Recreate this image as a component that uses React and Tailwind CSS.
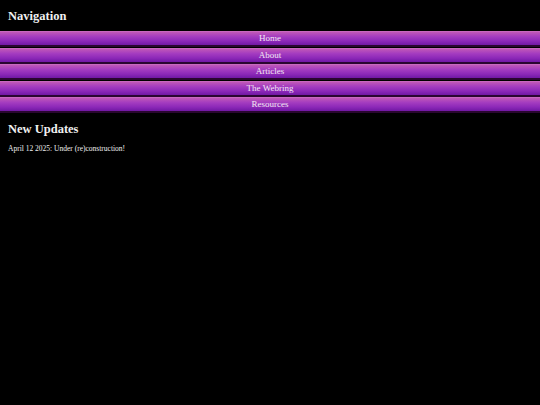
const links = ['Home', 'About', 'Articles', 'The Webring', 'Resources'];

export default function App() {
  return (
    <div className="min-h-[405px] bg-black text-[#f0f0f0]" style={{ fontFamily: '"Liberation Serif", serif' }}>
      <h2 className="px-2 pt-[8px] pb-[7px] text-[12.5px] font-bold leading-[16px]">Navigation</h2>
      <nav className="flex flex-col gap-[0.5px]">
        {links.map((l) => (
          <a
            key={l}
            href="#"
            className="block h-[16px] border-t border-[#c868c0] border-b-2 border-b-[#2a0630] bg-[linear-gradient(to_bottom,#c058b8,#a43cc0_35%,#8c28b8_70%,#7018a4)] text-center text-[9px] leading-[13px] text-[#f4e8f4]"
          >
            {l}
          </a>
        ))}
      </nav>
      <h2 className="px-2 pt-[8px] pb-[7px] text-[12.5px] font-bold leading-[16px]">New Updates</h2>
      <p className="px-2 text-[7.5px] leading-[10px]">April 12 2025: Under (re)construction!</p>
    </div>
  );
}
